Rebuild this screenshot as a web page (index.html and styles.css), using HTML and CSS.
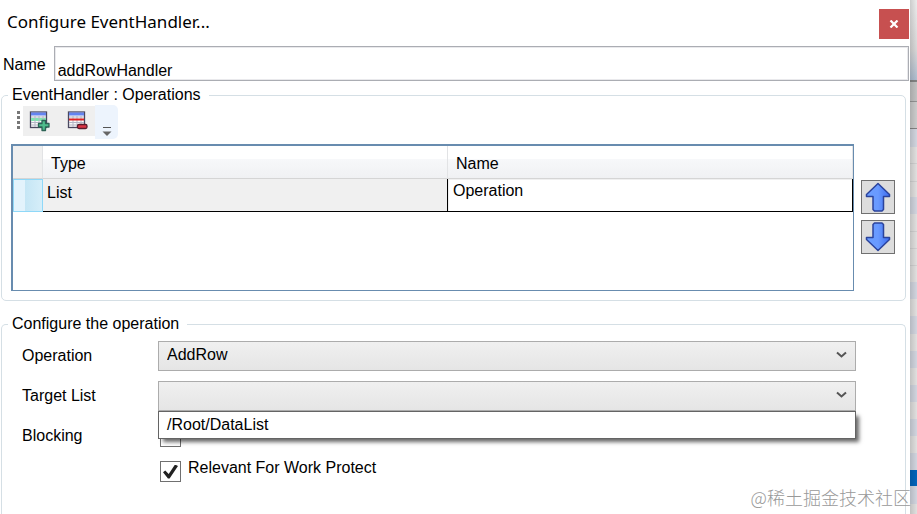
FILE: index.html
```html
<!DOCTYPE html>
<html lang="en">
<head>
<meta charset="utf-8">
<title>Configure EventHandler</title>
<link rel="stylesheet" href="styles.css">
</head>
<body>
<main class="dialog">
  <header class="titlebar">
    <h1 class="title">Configure EventHandler...</h1>
    <button class="close" type="button" aria-label="Close">
      <svg width="10" height="8" viewBox="0 0 10 8"><path d="M1.500 .5L8.500 7.500M8.500 .5L1.500 7.500" stroke="#fff" stroke-width="2.200" fill="none"/></svg>
    </button>
  </header>

  <div class="name-row">
    <label for="handler-name">Name</label>
    <input id="handler-name" class="name-input" type="text" value="addRowHandler">
  </div>

  <fieldset class="group">
    <legend>EventHandler : Operations</legend>
    <div class="toolbar">
      <span class="grip"></span>
      <div class="tools">
        <button class="tool" type="button" aria-label="Add row">
          <svg width="22" height="22" viewBox="0 0 22 22">
            <rect x="1.500" y="2" width="16" height="15.500" fill="#fafafa" stroke="#4a4860" stroke-width="1.300"/>
            <path d="M2 4H17" stroke="#6484f0" stroke-width="3"/>
            <path d="M2 9.500H17" stroke="#7fe6b0" stroke-width="3"/>
            <path d="M2 7H17M2 12.500H17M2 15H17M6 6V17M10 6V17M14 6V17" stroke="#b4b6c6" stroke-width="1"/>
            <path d="M13 10.500h3.500v3h3.500v3.500h-3.500v3.500H13V17h-3.500v-3.500H13z" fill="#4fbd8c" stroke="#2c6355" stroke-width="1.300" stroke-linejoin="round"/>
          </svg>
        </button>
        <button class="tool" type="button" aria-label="Remove row">
          <svg width="22" height="22" viewBox="0 0 22 22">
            <rect x="1.500" y="2" width="16" height="15.500" fill="#fafafa" stroke="#4a4860" stroke-width="1.300"/>
            <path d="M2 4H17" stroke="#6484f0" stroke-width="3"/>
            <path d="M2 7H17M2 12.500H17M2 15H17M6 6V17M10 6V17M14 6V17" stroke="#b4b6c6" stroke-width="1"/>
            <path d="M2 9.500H17" stroke="#e02424" stroke-width="2"/>
            <rect x="10.500" y="14.500" width="9.500" height="4" rx="1.500" fill="#dc3545" stroke="#5a1c2c" stroke-width="1.300"/>
          </svg>
        </button>
      </div>
      <button class="overflow" type="button" aria-label="More tools">
        <svg width="10" height="10" viewBox="0 0 10 10"><path d="M1 1.500H9" stroke="#555"/><path d="M.5 5.500H9.500L5 10z" fill="#666"/></svg>
      </button>
    </div>
    <div class="operations">
      <div class="grid-frame">
        <table class="grid">
          <colgroup><col class="col-mark"><col><col></colgroup>
          <thead>
            <tr><td class="corner"></td><th scope="col">Type</th><th scope="col">Name</th></tr>
          </thead>
          <tbody>
            <tr><td class="marker"></td><td class="cell-type">List</td><td class="cell-name">Operation</td></tr>
          </tbody>
        </table>
      </div>
      <div class="order">
        <button class="move" type="button" aria-label="Move up">
          <svg width="28" height="30" viewBox="0 0 28 30"><defs><linearGradient id="blue" x1="0" x2="1"><stop offset="0" stop-color="#6a9dff"/><stop offset=".5" stop-color="#699aff"/><stop offset="1" stop-color="#3d6cf0"/></linearGradient></defs><path d="M14 1.500L25.500 12.500V14.500H19.500V27.500L18 29H10.500L9 27.500V14.500H2.500V12.500z" fill="url(#blue)" stroke="#2b439c" stroke-width="1.500" stroke-linejoin="round"/></svg>
        </button>
        <button class="move" type="button" aria-label="Move down">
          <svg width="28" height="30" viewBox="0 0 28 30"><path d="M14 28.500L25.500 17.500V15.500H19.500V2.500L18 1H10.500L9 2.500V15.500H2.500V17.500z" fill="url(#blue)" stroke="#2b439c" stroke-width="1.500" stroke-linejoin="round"/></svg>
        </button>
      </div>
    </div>
  </fieldset>

  <fieldset class="group group-config">
    <legend>Configure the operation</legend>
    <div class="form">
      <label for="operation">Operation</label>
      <div class="combo">
        <select id="operation"><option>AddRow</option></select>
        <svg class="chevron" width="11" height="8" viewBox="0 0 11 8"><path d="M1 1.500L5.500 5.500L10 1.500" fill="none" stroke="#555" stroke-width="2"/></svg>
      </div>

      <label for="target">Target List</label>
      <div class="combo">
        <select id="target"><option value=""></option></select>
        <svg class="chevron" width="11" height="8" viewBox="0 0 11 8"><path d="M1 1.500L5.500 5.500L10 1.500" fill="none" stroke="#555" stroke-width="2"/></svg>
        <ul class="popup" role="listbox" aria-label="Target List">
          <li role="option">/Root/DataList</li>
        </ul>
      </div>

      <label for="blocking">Blocking</label>
      <div class="check"><input id="blocking" type="checkbox"></div>

      <div class="check check-labelled">
        <input id="relevant" type="checkbox" checked>
        <label for="relevant">Relevant For Work Protect</label>
      </div>
    </div>
  </fieldset>
</main>
<div class="backdrop"></div>
<div class="watermark" lang="zh">@稀土掘金技术社区</div>
</body>
</html>
```

FILE: styles.css
```css
* { box-sizing: border-box; }

body {
  margin: 0;
  min-height: 100vh;
  display: flex;
  position: relative;
  overflow: hidden;
  background: #fff;
  color: #000;
  font: 16px/18px "Liberation Sans", Arial, sans-serif;
}

button, input, select { font: inherit; color: inherit; border-radius: 0; margin: 0; }
button { padding: 0; border: 0; display: grid; place-items: center; }

.dialog { flex: 1; min-width: 0; display: flex; flex-direction: column; }

.titlebar {
  display: flex;
  justify-content: space-between;
  height: 46px;
  padding: 9px 1px 0 7px;
}
.title { margin: 0; font: 17px/26px "Noto Sans", "Open Sans", sans-serif; }
.close { width: 30px; height: 30px; background: #c75050; }

.name-row { display: flex; align-items: center; gap: 8px; padding: 0 1px 0 3px; }
.name-row label { padding-top: 2px; }
.name-input {
  flex: 1;
  min-width: 0;
  height: 35px;
  padding: 14px 3px 0;
  border: 1px solid #abadb3;
  box-shadow: inset 0 0 0 1px #e9e9ec;
  background: #fff;
}

.group {
  min-width: 0;
  margin: 5px 4px 0 1px;
  padding: 0 9px 9px;
  border: 1px solid #d5dfe5;
  border-radius: 5px;
}
.group legend { margin-left: -3px; padding: 0 8px 0 4px; }

.toolbar { display: flex; align-items: flex-start; height: 40px; padding: 1px 0 0 6px; }
.grip {
  width: 3px;
  height: 19px;
  margin: 6px 3px 0 0;
  background: repeating-linear-gradient(#777 0 3px, transparent 3px 5px);
}
.tools { display: flex; gap: 16px; height: 30px; margin-top: 1px; padding: 0 6px; background: #efefef; }
.tool { width: 22px; background: none; }
.overflow {
  width: 23px;
  height: 34px;
  padding-top: 18px;
  background: #edf4fd;
  border-radius: 0 5px 5px 0;
}

.operations { display: flex; align-items: flex-start; gap: 7px; padding-right: 1px; }
.grid-frame {
  flex: 1;
  min-width: 0;
  height: 147px;
  border: solid #688caf;
  border-width: 2px 1px 1px 2px;
}
.grid { width: 100%; table-layout: fixed; border-collapse: separate; border-spacing: 0; }
.grid td, .grid th { padding: 0; text-align: left; font-weight: normal; }
.col-mark { width: 30px; }
.grid th, .grid .corner { height: 33px; border-bottom: 1px solid #d5d5d5; }
.grid th {
  padding: 3px 8px 0;
  border-right: 1px solid #e2e3e5;
  background: linear-gradient(#fff 40%, #f7f8fa 40%, #f0f1f3);
}
.grid .corner { background: #f0f0f0; border-right: 1px solid #e2e3e5; }
.marker {
  height: 33px;
  border: 1px solid #8fd8f8;
  background: linear-gradient(90deg, #e3f3fc 40%, #c5e6f5 40%, #d6eef9);
}
.grid .cell-type, .grid .cell-name {
  border-right: 1px solid #000;
  border-bottom: 1px solid #000;
  vertical-align: top;
}
.grid .cell-type { padding: 5px 4px; background: #f0f0f0; }
.grid .cell-name { padding: 3px 5px; box-shadow: inset 1px 1px #f0f0f0; }

.order { display: flex; flex-direction: column; gap: 6px; width: 34px; margin-top: 36px; }
.move { height: 34px; border: 1px solid #707070; background: #ddd; }

.group-config { flex: 1; margin-top: 14px; border-bottom: 0; border-radius: 5px 5px 0 0; }

.form {
  display: grid;
  grid-template-columns: 136px 1fr;
  grid-template-rows: 30px 30px 30px 20px;
  row-gap: 10px;
  align-items: center;
  padding: 8px 40px 0 11px;
}
.combo { position: relative; height: 30px; }
.combo select {
  appearance: none;
  width: 100%;
  height: 30px;
  padding: 0 30px 3px 8px;
  border: 1px solid #acacac;
  background: linear-gradient(#f0f0f0, #e5e5e5);
}
.chevron { position: absolute; right: 9px; top: 10px; }
.popup {
  position: absolute;
  z-index: 1;
  inset: 100% 0 auto;
  margin: 0;
  padding: 4px 8px;
  list-style: none;
  border: 1px solid #646464;
  background: #fff;
  box-shadow: 4px 4px 4px -1px rgb(0 0 0 / 60%);
}
.check { display: flex; gap: 7px; padding-left: 2px; }
.check-labelled { grid-column: 2; }
.check input {
  appearance: none;
  width: 21px;
  height: 21px;
  border: 1px solid #707070;
  background: #fff;
}
.check input:checked::before {
  content: "";
  display: block;
  width: 15px;
  height: 14px;
  margin: 3px 2px;
  background: #212121;
  clip-path: polygon(0 55%, 15% 42%, 38% 68%, 80% 0, 100% 10%, 44% 100%, 33% 100%);
}
.check label { line-height: 14px; }

/* Slice of the window behind the dialog */
.backdrop {
  width: 7px;
  background:
    linear-gradient(90deg, rgb(0 0 0 / 16%), rgb(0 0 0 / 3%)),
    linear-gradient(
      #f4f4f4 0, #dedede 50px, #b4c3d6 80px, #888 80px 82px,
      #c8c8c8 82px 101px, #999 101px 102px, #d2d2d2 102px 128px, #888 128px 129px,
      #d8dce6 129px 147px, #e8e7e6 147px 163px, #d8d8d8 163px 164px,
      #e8e7e6 164px 181px, #d8d8d8 181px 182px, #e8e7e6 182px 197px,
      #d8dce6 197px 214px, #e8e7e6 214px 231px,
      #d8d8d8 231px 232px, #e8e7e6 232px 248px, #d8d8d8 248px 249px,
      #e8e7e6 249px 265px, #d8d8d8 265px 266px,
      #e8e7e6 266px 282px, #d8dce6 282px 299px, #e8e7e6 299px 316px,
      #d8dce6 316px 334px, #e8e7e6 334px 351px, #d8dce6 351px 368px,
      #e8e7e6 368px 385px, #d8dce6 385px 402px, #e8e7e6 402px 419px,
      #d8dce6 419px 436px, #e8e7e6 436px 453px, #d8dce6 453px 470px,
      #0067c0 470px 486px, #d8dce6 486px 504px, #e8e7e6 504px);
}

.watermark {
  position: absolute;
  right: 6px;
  bottom: 4px;
  font: 300 18px/26px "Noto Sans CJK SC", sans-serif;
  color: #999;
}
```
